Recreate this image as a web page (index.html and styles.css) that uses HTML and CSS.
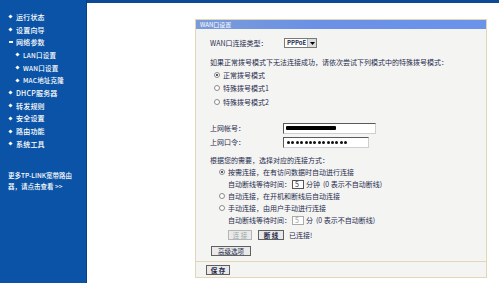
FILE: index.html
```html
<!DOCTYPE html>
<html lang="zh-CN">
<head>
<meta charset="utf-8">
<title>WAN口设置</title>
<link rel="stylesheet" href="styles.css">
</head>
<body>
<div class="page">
  <aside class="sidebar">
    <ul class="menu">
      <li class="item"><span class="dot"></span>运行状态</li>
      <li class="item"><span class="dot"></span>设置向导</li>
      <li class="item"><span class="dash"></span>网络参数</li>
      <li class="item sub"><span class="dot"></span>LAN口设置</li>
      <li class="item sub"><span class="dot"></span>WAN口设置</li>
      <li class="item sub"><span class="dot"></span>MAC地址克隆</li>
      <li class="item"><span class="dot"></span>DHCP服务器</li>
      <li class="item"><span class="dot"></span>转发规则</li>
      <li class="item"><span class="dot"></span>安全设置</li>
      <li class="item"><span class="dot"></span>路由功能</li>
      <li class="item"><span class="dot"></span>系统工具</li>
    </ul>
    <p class="more">更多TP-LINK宽带路由<br>器，请点击查看 &gt;&gt;</p>
  </aside>
  <main class="main">
    <div class="topbar"></div>
    <section class="panel">
      <div class="title">WAN口设置</div>
      <div class="content">
        <div class="row r-type">
          <span class="label">WAN口连接类型：</span>
          <span class="select"><span class="sel-text">PPPoE</span><span class="sel-btn"><svg width="5" height="3" viewBox="0 0 5 3"><path d="M0 0H5L2.5 3Z" fill="#000"/></svg></span></span>
        </div>
        <div class="row r-info">如果正常拨号模式下无法连接成功，请依次尝试下列模式中的特殊拨号模式：</div>
        <div class="row r-radio g1"><span class="radio on"></span>正常拨号模式</div>
        <div class="row r-radio g1"><span class="radio"></span>特殊拨号模式1</div>
        <div class="row r-radio g1"><span class="radio"></span>特殊拨号模式2</div>
        <div class="row r-field first">
          <span class="label">上网帐号：</span>
          <span class="input acct"><span class="redact"></span></span>
        </div>
        <div class="row r-field">
          <span class="label">上网口令：</span>
          <span class="input pwd"><span class="pdot"></span><span class="pdot"></span><span class="pdot"></span><span class="pdot"></span><span class="pdot"></span><span class="pdot"></span><span class="pdot"></span><span class="pdot"></span><span class="pdot"></span><span class="pdot"></span><span class="pdot"></span><span class="pdot"></span><span class="pdot"></span><span class="pdot"></span></span>
        </div>
        <div class="row r-info2">根据您的需要，选择对应的连接方式：</div>
        <div class="row r-conn g2"><span class="radio on"></span>按需连接，在有访问数据时自动进行连接</div>
        <div class="row r-conn sub2">自动断线等待时间：<span class="mini">5</span>分钟 <span class="note">(0 表示不自动断线)</span></div>
        <div class="row r-conn g2"><span class="radio"></span>自动连接，在开机和断线后自动连接</div>
        <div class="row r-conn g2"><span class="radio"></span>手动连接，由用户手动进行连接</div>
        <div class="row r-conn sub2">自动断线等待时间：<span class="mini dis">5</span>分 <span class="note">(0 表示不自动断线)</span></div>
        <div class="row r-btns">
          <span class="btn dis">连 接</span>
          <span class="btn strong">断 线</span>
          <span class="status">已连接!</span>
        </div>
        <div class="row r-adv"><span class="btn">高级选项</span></div>
      </div>
      <div class="footer"><span class="btn strong save">保 存</span></div>
    </section>
  </main>
</div>
</body>
</html>
```

FILE: styles.css
```css
* { box-sizing: border-box; }
html, body { margin: 0; padding: 0; }
body {
  width: 499px;
  height: 283px;
  overflow: hidden;
  background: #ffffff;
  font-family: "Noto Sans CJK SC", "DejaVu Sans", sans-serif;
  font-size: 7px;
  color: #1f2c4c;
}
.page { display: flex; height: 283px; }

.sidebar {
  width: 87px;
  flex: none;
  background: #0a53a6;
  border-right: 1px solid #083f86;
  color: #ffffff;
  padding-top: 10.5px;
}
.menu { list-style: none; margin: 0; padding: 0; }
.item {
  display: flex;
  align-items: center;
  height: 12.7px;
  padding-left: 9px;
  font-size: 7px;
  font-weight: 500;
  letter-spacing: 0.2px;
  white-space: nowrap;
}
.item.sub { padding-left: 16px; font-size: 6.5px; }
.dot {
  width: 3px; height: 3px;
  background: #ffffff;
  transform: rotate(45deg);
  margin-right: 4px;
  flex: none;
}
.dash { width: 4px; height: 1.5px; background: #fff; margin-right: 3px; flex: none; }
.more {
  margin: 20px 0 0 8px;
  font-size: 6.5px;
  line-height: 10.5px;
  font-weight: 500;
  white-space: nowrap;
}

.main { flex: 1; display: flex; flex-direction: column; }
.topbar { height: 3px; background: #0c4a96; flex: none; }

.panel {
  margin: 16px 0 0 108px;
  width: 292px;
  height: 259px;
  border: 1px solid #e3d6b4;
  background: #f4f4f3;
  display: flex;
  flex-direction: column;
}
.title {
  height: 9px;
  background: linear-gradient(90deg, #7b9bd8 0%, #6a91e6 40%, #6b93ea 100%);
  color: #ffffff;
  font-size: 6px;
  line-height: 9px;
  padding-left: 4px;
  flex: none;
}
.content { flex: 1; padding: 8px 0 0 14px; }
.row { display: flex; align-items: center; white-space: nowrap; }
.label { width: 74px; flex: none; }
.r-type { height: 12px; }
.select {
  display: flex;
  align-items: center;
  width: 33px; height: 10px;
  border: 1px solid #7a7a7a;
  background: #fff;
  font-size: 6px;
  font-weight: bold;
}
.sel-text { flex: 1; padding-left: 2px; line-height: 8px; }
.sel-btn {
  width: 9px; height: 8px;
  background: #dcdcdc;
  border-left: 1px solid #b0b0b0;
  display: flex; align-items: center; justify-content: center;
}
.r-info { height: 12px; margin-top: 7px; }
.r-radio { height: 13.5px; }
.g1 { padding-left: 4px; }
.radio {
  width: 6px; height: 6px;
  border-radius: 50%;
  border: 1px solid #8a8a8a;
  background: #fff;
  margin-right: 3px;
  flex: none;
  position: relative;
}
.radio.on::after {
  content: "";
  position: absolute;
  left: 1px; top: 1px;
  width: 2px; height: 2px;
  border-radius: 50%;
  background: #222;
}
.r-field { height: 14px; }
.r-field.first { margin-top: 12.5px; }
.r-field .label { width: 73px; }
.input {
  display: flex;
  align-items: center;
  height: 11px;
  border: 1px solid #5a5a5a;
  border-bottom-color: #cfcfcf;
  border-right-color: #cfcfcf;
  background: #fff;
  padding-left: 2px;
}
.input.acct { width: 93px; }
.redact { width: 50px; height: 4px; background: #000; border-radius: 1px; }
.input.pwd { width: 86px; gap: 1.4px; padding-left: 3px; }
.pdot { width: 3px; height: 3px; border-radius: 50%; background: #111; flex: none; }
.r-info2 { height: 12px; margin-top: 5px; }
.r-conn { height: 12px; }
.g2 { padding-left: 9px; }
.sub2 { padding-left: 18px; }
.mini {
  display: inline-flex;
  align-items: center;
  width: 12px; height: 9px;
  border: 1px solid #555;
  background: #fff;
  padding-left: 2px;
  margin: 0 2px 0 1px;
}
.mini.dis { color: #999; border-color: #aaa; }
.note { margin-left: 3px; }
.r-btns { height: 10px; margin-top: 4px; padding-left: 18px; }
.btn {
  display: inline-flex;
  align-items: center;
  justify-content: center;
  height: 10px;
  padding: 0;
  border: 1px solid #606060;
  background: #e9e9e9;
  font-size: 6.5px;
  color: #1f2c4c;
  white-space: nowrap;
  flex: none;
}
.btn.dis { color: #9aa; border-color: #b5b5b5; width: 24px; }
.btn.strong { font-weight: bold; width: 26px; margin-left: 6px; }
.status { margin-left: 5px; }
.r-adv { height: 10px; margin-top: 6px; }
.r-adv .btn { width: 40px; margin-left: 1px; }
.footer {
  height: 16px;
  border-top: 1px solid #e3d6b4;
  display: flex;
  align-items: center;
  padding-left: 10px;
  flex: none;
}
.btn.save { margin-left: 0; width: 24px; }
```
